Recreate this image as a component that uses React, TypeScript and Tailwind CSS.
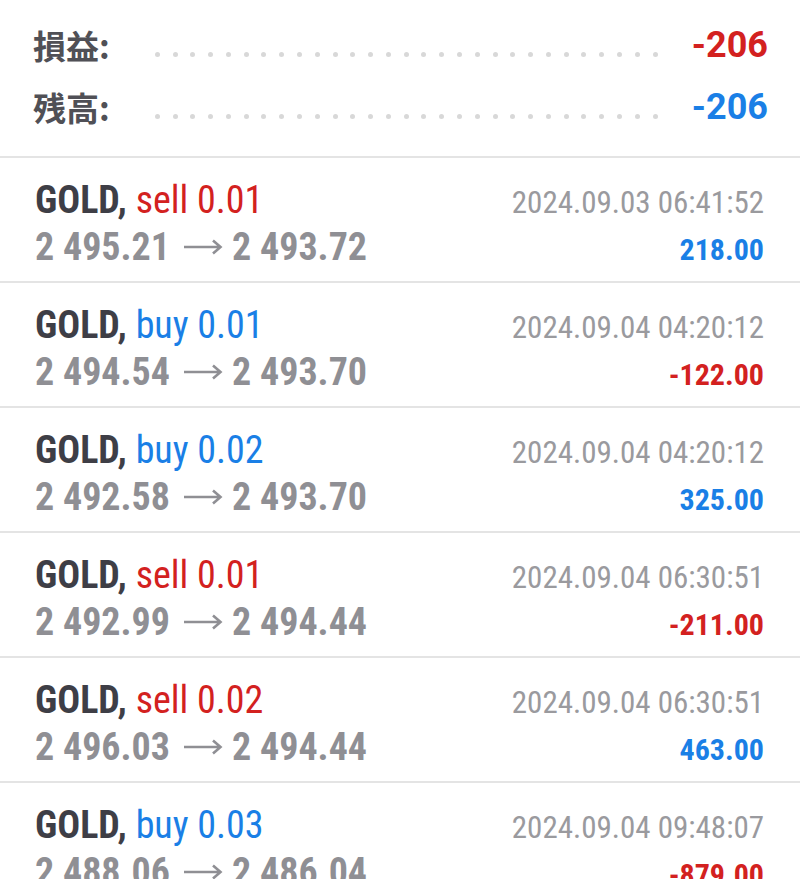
import React from 'react';

type Deal = {
  side: 'buy' | 'sell';
  volume: string;
  open: string;
  close: string;
  time: string;
  profit: string;
};

const deals: Deal[] = [
  { side: 'sell', volume: '0.01', open: '2 495.21', close: '2 493.72', time: '2024.09.03 06:41:52', profit: '218.00' },
  { side: 'buy', volume: '0.01', open: '2 494.54', close: '2 493.70', time: '2024.09.04 04:20:12', profit: '-122.00' },
  { side: 'buy', volume: '0.02', open: '2 492.58', close: '2 493.70', time: '2024.09.04 04:20:12', profit: '325.00' },
  { side: 'sell', volume: '0.01', open: '2 492.99', close: '2 494.44', time: '2024.09.04 06:30:51', profit: '-211.00' },
  { side: 'sell', volume: '0.02', open: '2 496.03', close: '2 494.44', time: '2024.09.04 06:30:51', profit: '463.00' },
  { side: 'buy', volume: '0.03', open: '2 488.06', close: '2 486.04', time: '2024.09.04 09:48:07', profit: '-879.00' },
];

const dots = Array.from({ length: 29 });

function Arrow() {
  return (
    <svg width="40" height="16" viewBox="0 0 40 16" className="inline-block ml-[13px] mr-[9px]">
      <path d="M1 8H37M30 1.5L37.5 8L30 14.5" fill="none" stroke="#8f8f94" strokeWidth="2.6" />
    </svg>
  );
}

function SummaryRow({ label, value, color }: { label: string; value: string; color: string }) {
  return (
    <div className="flex items-center h-[62px]">
      <span className="text-[33px] font-bold text-[#505056] font-['Noto_Sans_CJK_JP',sans-serif] leading-none">{label}</span>
      <div className="flex-1 flex justify-between ml-[45px] mr-[34px] pt-[18px]">
        {dots.map((_, i) => (
          <span key={i} className="w-[5px] h-[5px] rounded-full bg-[#d8d8d8]" />
        ))}
      </div>
      <span className={`text-[36px] font-bold leading-none ${color}`}>{value}</span>
    </div>
  );
}

export default function App() {
  return (
    <div className="w-[800px] h-[879px] overflow-hidden bg-white font-['Roboto_Condensed',Roboto,sans-serif]">
      <div className="pl-[33px] pr-[32px] pt-[14px] pb-[18px] border-b-2 border-[#e4e4e4] font-['Roboto',sans-serif]">
        <SummaryRow label="損益:" value="-206" color="text-[#d3211f]" />
        <SummaryRow label="残高:" value="-206" color="text-[#1a7fe6]" />
      </div>
      {deals.map((d, i) => (
        <div key={i} className="pl-[35px] pr-[36px] pt-[20px] h-[125px] border-b-2 border-[#e4e4e4] font-stretch-condensed">
          <div className="flex justify-between items-baseline leading-[44px]">
            <span className="text-[38px]">
              <span className="font-bold text-[#3e3e46]">GOLD,</span>{' '}
              <span className={d.side === 'sell' ? 'text-[#d3211f]' : 'text-[#1a7fe6]'}>
                {d.side} {d.volume}
              </span>
            </span>
            <span className="text-[31px] text-[#9a9a9e]">{d.time}</span>
          </div>
          <div className="flex justify-between items-baseline leading-[44px]">
            <span className="text-[38px] font-bold text-[#8f8f94] flex items-center">
              {d.open}
              <Arrow />
              {d.close}
            </span>
            <span className={`text-[30px] font-bold ${d.profit.startsWith('-') ? 'text-[#d3211f]' : 'text-[#1a7fe6]'}`}>
              {d.profit}
            </span>
          </div>
        </div>
      ))}
    </div>
  );
}
